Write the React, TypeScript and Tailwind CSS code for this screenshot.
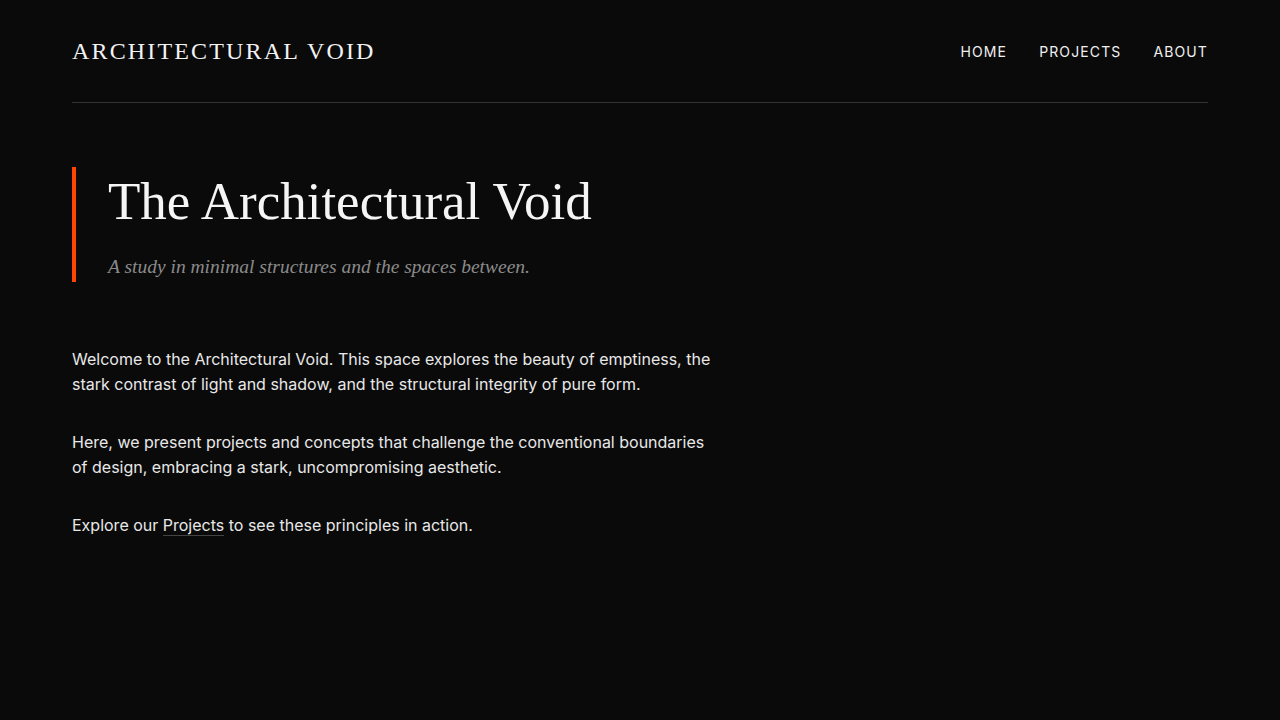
const serif = { fontFamily: '"Liberation Serif", "DejaVu Serif", serif' };

const navItems = ['Home', 'Projects', 'About'];

export default function App() {
  return (
    <div
      className="min-h-screen w-full bg-[#0a0a0a] text-[#e8e8e8]"
      style={{ fontFamily: 'Inter, "Liberation Sans", sans-serif' }}
    >
      <div className="mx-[72px]">
        <header className="flex h-[103px] items-center justify-between border-b border-[#333333]">
          <a
            href="#"
            className="text-[24px] uppercase leading-none tracking-[0.09em] text-[#f2f2f2]"
            style={serif}
          >
            Architectural Void
          </a>
          <nav className="pt-[1px]">
            <ul className="flex gap-8 text-[14px] uppercase tracking-[0.08em] text-[#f0f0f0]">
              {navItems.map((item) => (
                <li key={item}>
                  <a href="#">{item}</a>
                </li>
              ))}
            </ul>
          </nav>
        </header>

        <main className="pt-16">
          <div className="border-l-4 border-[#ff4500] pl-8 pt-[5px]">
            <h1
              className="text-[53px] leading-[1.1] text-[#f5f5f5]"
              style={serif}
            >
              The Architectural Void
            </h1>
            <p
              className="mt-[22px] text-[19.5px] italic text-[#8a8a8a]"
              style={serif}
            >
              A study in minimal structures and the spaces between.
            </p>
          </div>

          <div className="mt-[65px] max-w-[650px] text-[16px] leading-[1.6]">
            <p className="mb-8">
              Welcome to the Architectural Void. This space explores the beauty of emptiness, the
              stark contrast of light and shadow, and the structural integrity of pure form.
            </p>
            <p className="mb-8">
              Here, we present projects and concepts that challenge the conventional boundaries of
              design, embracing a stark, uncompromising aesthetic.
            </p>
            <p>
              Explore our{' '}
              <a href="#" className="border-b border-[#444444]">
                Projects
              </a>{' '}
              to see these principles in action.
            </p>
          </div>
        </main>
      </div>
    </div>
  );
}
